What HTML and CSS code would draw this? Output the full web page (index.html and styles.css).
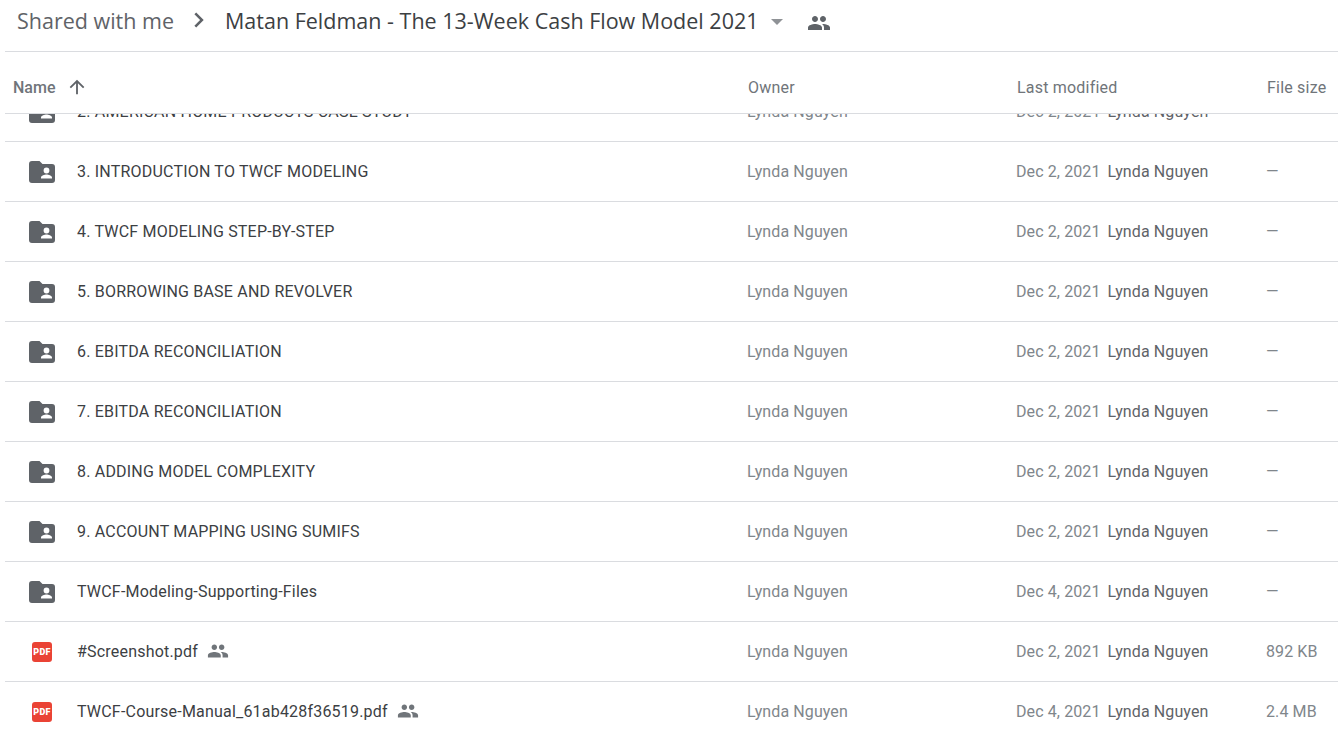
FILE: index.html
```html
<!DOCTYPE html>
<html lang="en">
<head>
    <meta charset="UTF-8">
    <title>Matan Feldman - The 13-Week Cash Flow Model 2021 - Google Drive</title>
    <link rel="stylesheet" href="styles.css">
</head>
<body>
    <svg class="icon-defs" width="0" height="0">
        <symbol id="people" viewBox="0 0 24 24">
            <path d="M16 11c1.66 0 2.99-1.34 2.99-3S17.66 5 16 5s-3 1.34-3 3 1.34 3 3 3zm-8 0c1.66 0 2.99-1.34 2.99-3S9.66 5 8 5 5 6.34 5 8s1.34 3 3 3zm0 2c-2.33 0-7 1.17-7 3.5V19h14v-2.5C15 14.17 10.33 13 8 13zm8 0c-.29 0-.62.02-.97.05 1.16.84 1.97 1.97 1.97 3.45V19h6v-2.5c0-2.33-4.67-3.5-7-3.5z"/>
        </symbol>
        <symbol id="shared-folder" viewBox="0 0 26 22">
            <path fill-rule="evenodd" d="M3 0h7.5l3 3H23a3 3 0 0 1 3 3v13a3 3 0 0 1-3 3H3a3 3 0 0 1-3-3V3a3 3 0 0 1 3-3zm14.5 6.6a2.9 2.9 0 1 0 0 5.8 2.9 2.9 0 0 0 0-5.8zM12 17.6h11v-1.2c0-1.9-3.7-2.9-5.5-2.9s-5.5 1-5.5 2.9z"/>
        </symbol>
    </svg>

    <div class="page">
        <div class="toolbar">
            <span class="crumb">Shared with me</span>
            <svg class="crumb-arrow" viewBox="0 0 24 24"><path d="M9.2 4.5 7.4 6.3 13.1 12l-5.7 5.7 1.8 1.8 7.5-7.5z"/></svg>
            <span class="crumb-current">Matan Feldman - The 13-Week Cash Flow Model 2021</span>
            <span class="caret"></span>
            <svg class="toolbar-people"><use href="#people"/></svg>
        </div>

        <div class="list-head">
            <div class="head-name">Name
                <svg class="sort-arrow" viewBox="0 0 24 24"><path d="M4 12l1.41 1.41L11 7.83V20h2V7.83l5.58 5.59L20 12l-8-8-8 8z"/></svg>
            </div>
            <div>Owner</div>
            <div>Last modified</div>
            <div>File size</div>
        </div>

        <div class="list">
            <div class="rows">
                <div class="row">
                    <div class="cell-name"><svg class="folder"><use href="#shared-folder"/></svg>2. AMERICAN HOME PRODUCTS CASE STUDY</div>
                    <div class="cell-muted">Lynda Nguyen</div>
                    <div class="cell-muted">Dec 2, 2021<span class="modifier">Lynda Nguyen</span></div>
                    <div class="cell-muted">—</div>
                </div>
                <div class="row">
                    <div class="cell-name"><svg class="folder"><use href="#shared-folder"/></svg>3. INTRODUCTION TO TWCF MODELING</div>
                    <div class="cell-muted">Lynda Nguyen</div>
                    <div class="cell-muted">Dec 2, 2021<span class="modifier">Lynda Nguyen</span></div>
                    <div class="cell-muted">—</div>
                </div>
                <div class="row">
                    <div class="cell-name"><svg class="folder"><use href="#shared-folder"/></svg>4. TWCF MODELING STEP-BY-STEP</div>
                    <div class="cell-muted">Lynda Nguyen</div>
                    <div class="cell-muted">Dec 2, 2021<span class="modifier">Lynda Nguyen</span></div>
                    <div class="cell-muted">—</div>
                </div>
                <div class="row">
                    <div class="cell-name"><svg class="folder"><use href="#shared-folder"/></svg>5. BORROWING BASE AND REVOLVER</div>
                    <div class="cell-muted">Lynda Nguyen</div>
                    <div class="cell-muted">Dec 2, 2021<span class="modifier">Lynda Nguyen</span></div>
                    <div class="cell-muted">—</div>
                </div>
                <div class="row">
                    <div class="cell-name"><svg class="folder"><use href="#shared-folder"/></svg>6. EBITDA RECONCILIATION</div>
                    <div class="cell-muted">Lynda Nguyen</div>
                    <div class="cell-muted">Dec 2, 2021<span class="modifier">Lynda Nguyen</span></div>
                    <div class="cell-muted">—</div>
                </div>
                <div class="row">
                    <div class="cell-name"><svg class="folder"><use href="#shared-folder"/></svg>7. EBITDA RECONCILIATION</div>
                    <div class="cell-muted">Lynda Nguyen</div>
                    <div class="cell-muted">Dec 2, 2021<span class="modifier">Lynda Nguyen</span></div>
                    <div class="cell-muted">—</div>
                </div>
                <div class="row">
                    <div class="cell-name"><svg class="folder"><use href="#shared-folder"/></svg>8. ADDING MODEL COMPLEXITY</div>
                    <div class="cell-muted">Lynda Nguyen</div>
                    <div class="cell-muted">Dec 2, 2021<span class="modifier">Lynda Nguyen</span></div>
                    <div class="cell-muted">—</div>
                </div>
                <div class="row">
                    <div class="cell-name"><svg class="folder"><use href="#shared-folder"/></svg>9. ACCOUNT MAPPING USING SUMIFS</div>
                    <div class="cell-muted">Lynda Nguyen</div>
                    <div class="cell-muted">Dec 2, 2021<span class="modifier">Lynda Nguyen</span></div>
                    <div class="cell-muted">—</div>
                </div>
                <div class="row">
                    <div class="cell-name"><svg class="folder"><use href="#shared-folder"/></svg>TWCF-Modeling-Supporting-Files</div>
                    <div class="cell-muted">Lynda Nguyen</div>
                    <div class="cell-muted">Dec 4, 2021<span class="modifier">Lynda Nguyen</span></div>
                    <div class="cell-muted">—</div>
                </div>
                <div class="row">
                    <div class="cell-name"><span class="pdf"><span class="pdf-label">PDF</span></span>#Screenshot.pdf<svg class="row-people"><use href="#people"/></svg></div>
                    <div class="cell-muted">Lynda Nguyen</div>
                    <div class="cell-muted">Dec 2, 2021<span class="modifier">Lynda Nguyen</span></div>
                    <div class="cell-muted">892 KB</div>
                </div>
                <div class="row">
                    <div class="cell-name"><span class="pdf"><span class="pdf-label">PDF</span></span>TWCF-Course-Manual_61ab428f36519.pdf<svg class="row-people"><use href="#people"/></svg></div>
                    <div class="cell-muted">Lynda Nguyen</div>
                    <div class="cell-muted">Dec 4, 2021<span class="modifier">Lynda Nguyen</span></div>
                    <div class="cell-muted">2.4 MB</div>
                </div>
            </div>
        </div>
    </div>
</body>
</html>
```

FILE: styles.css
```css
html, body {
    margin: 0;
    padding: 0;
    height: 100%;
    overflow: hidden;
}

body {
    font-family: 'Roboto', 'Liberation Sans', sans-serif;
    background-color: #fff;
    color: #3c4043;
}

.icon-defs {
    display: none;
}

.page {
    height: 736px;
    display: flex;
    flex-direction: column;
    padding-left: 5px;
}

/* breadcrumb bar */
.toolbar {
    height: 52px;
    flex-shrink: 0;
    display: flex;
    align-items: center;
    padding: 0 0 11px 12px;
    box-sizing: border-box;
    border-bottom: 1px solid #dadce0;
    font-family: 'Open Sans', 'Roboto', sans-serif;
    font-size: 21.5px;
}

.crumb {
    color: #5f6368;
}

.crumb-arrow {
    width: 24px;
    height: 24px;
    margin: 0 14px 0 13px;
    fill: #5f6368;
}

.crumb-current {
    color: #3c4043;
}

.caret {
    width: 0;
    height: 0;
    margin: 3px 0 0 12px;
    border-left: 6px solid transparent;
    border-right: 6px solid transparent;
    border-top: 6px solid #8f9296;
}

.toolbar-people {
    width: 24px;
    height: 24px;
    margin: 5px 0 0 24px;
    fill: #5f6368;
}

/* column header */
.list-head,
.row {
    display: grid;
    grid-template-columns: 742px 269px 250px 1fr;
    align-items: center;
}

.list-head {
    flex-shrink: 0;
    height: 62px;
    box-sizing: border-box;
    border-bottom: 1px solid #dadce0;
    font-size: 16px;
    letter-spacing: 0.2px;
    color: #70757a;
    padding-left: 1px;
    padding-top: 9px;
}

.head-name {
    display: flex;
    align-items: center;
    padding-left: 7px;
    font-weight: 500;
    letter-spacing: 0;
}

.sort-arrow {
    width: 22px;
    height: 22px;
    margin-left: 11px;
    fill: #5f6368;
}

/* file rows */
.list {
    flex: 1;
    overflow: hidden;
}

.rows {
    margin-top: -32px;
}

.row {
    height: 60px;
    box-sizing: border-box;
    border-bottom: 1px solid #dadce0;
    font-size: 16px;
    letter-spacing: 0.1px;
}

.cell-name {
    display: flex;
    align-items: center;
    letter-spacing: 0.2px;
    color: #3c4043;
}

.folder {
    width: 26px;
    height: 22px;
    margin: 0 22px 0 24px;
    fill: #5f6368;
}

.pdf {
    width: 20px;
    height: 20px;
    margin: 0 25px 0 27px;
    background-color: #ea4335;
    border-radius: 3px;
    display: flex;
    align-items: center;
    justify-content: center;
}

.pdf-label {
    color: #fff;
    font-size: 9px;
    font-weight: 900;
    letter-spacing: 0.3px;
}

.row-people {
    width: 22px;
    height: 22px;
    margin-left: 9px;
    margin-top: -2px;
    fill: #70757a;
}

.cell-muted {
    color: #80868b;
}

.modifier {
    color: #5f6368;
    margin-left: 7px;
}
```
